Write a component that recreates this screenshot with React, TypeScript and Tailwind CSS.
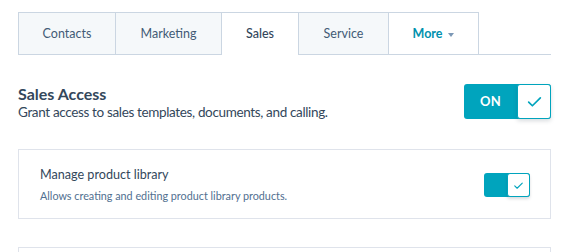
import React from "react"

const tabs = [
  { label: "Contacts", w: "w-[97px]" },
  { label: "Marketing", w: "w-[106px]" },
  { label: "Sales", w: "w-[77px]", active: true },
  { label: "Service", w: "w-[90px]" },
]

function Check({ className }: { className?: string }) {
  return (
    <svg viewBox="0 0 16 16" className={className} fill="none" stroke="currentColor" strokeWidth="1.6" strokeLinecap="round" strokeLinejoin="round">
      <path d="M2.5 8.5l3.5 3.5 7.5-7.5" />
    </svg>
  )
}

export default function App() {
  return (
    <div className="ml-[18px] w-[533px] pt-[12px] font-['Lato','Open_Sans',sans-serif] text-[#33475b]">
      <div className="flex h-[43px]">
        {tabs.map((t) => (
          <div
            key={t.label}
            className={
              t.active
                ? `${t.w} flex items-center justify-center border-l border-t border-[#cbd6e2] bg-white pt-[1px] text-[12.5px] font-medium`
                : `${t.w} flex items-center justify-center border-b border-l border-t border-[#cbd6e2] bg-[#f5f8fa] pt-[1px] text-[12.5px] text-[#425b76]`
            }
          >
            {t.label}
          </div>
        ))}
        <div className="flex w-[91px] items-center justify-center gap-[6px] border-x border-b border-t border-[#cbd6e2] bg-white pt-[1px] text-[12.5px] font-bold text-[#0091ae]">
          More
          <span className="mt-[1px] h-0 w-0 border-x-[3.5px] border-t-[4px] border-x-transparent border-t-[#7c98b6]" />
        </div>
        <div className="flex-1 border-b border-[#cbd6e2]" />
      </div>

      <div className="mt-[29px] flex h-[35px] items-start justify-between">
        <div>
          <div className="text-[16px] font-bold leading-[19px]">Sales Access</div>
          <div className="mt-[1px] text-[13.5px] leading-[17px] tracking-[-0.35px]">Grant access to sales templates, documents, and calling.</div>
        </div>
        <div className="flex h-[35px] w-[87px] rounded-[3px] bg-[#00a4bd]">
          <div className="flex flex-1 items-center justify-center text-[13px] font-bold tracking-wide text-white">ON</div>
          <div className="flex w-[34px] items-center justify-center rounded-[3px] border border-[#00a4bd] bg-white text-[#00a4bd] shadow-[0_2px_4px_rgba(45,62,80,0.18)]">
            <Check className="h-[17px] w-[17px]" />
          </div>
        </div>
      </div>

      <div className="mt-[30px] flex h-[70px] items-start justify-between border border-[#dfe3eb] pl-[21px] pr-[20px]">
        <div className="pt-[17px]">
          <div className="text-[12.6px] leading-[16px]">Manage product library</div>
          <div className="mt-[6px] text-[10.8px] leading-[14px] text-[#516f90]">Allows creating and editing product library products.</div>
        </div>
        <div className="mt-[23px] flex h-[24px] w-[46px] rounded-[3px] bg-[#00a4bd]">
          <div className="flex-1" />
          <div className="flex w-[23px] items-center justify-center rounded-[3px] border border-[#00a4bd] bg-white text-[#00a4bd] shadow-[0_2px_3px_rgba(45,62,80,0.18)]">
            <Check className="h-[11px] w-[11px]" />
          </div>
        </div>
      </div>

      <div className="mt-[28px] h-[40px] border border-[#dfe3eb]" />
    </div>
  )
}
